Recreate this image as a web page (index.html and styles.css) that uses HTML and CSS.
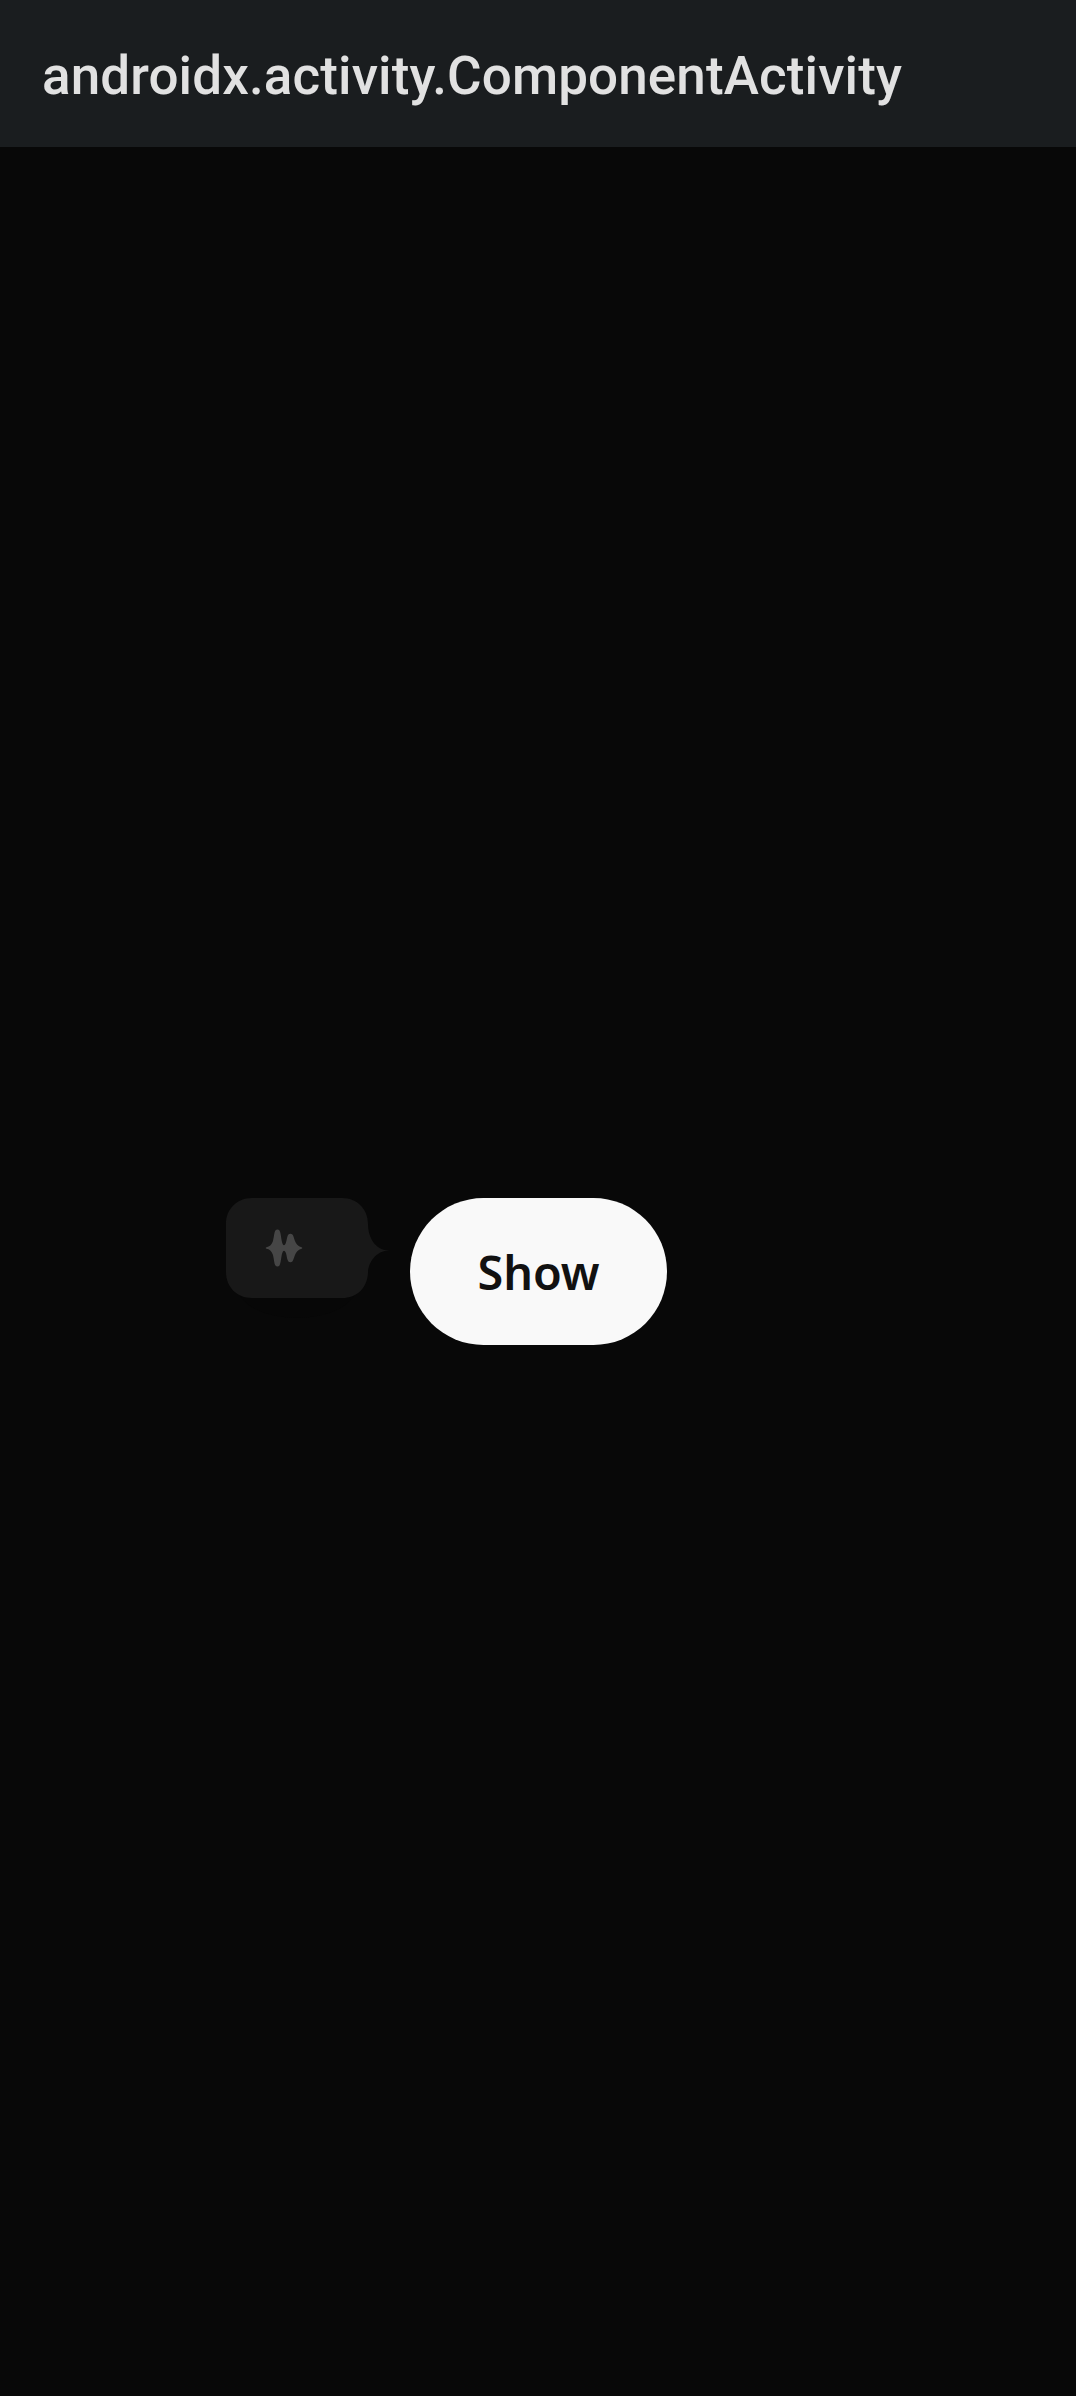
FILE: index.html
```html
<!DOCTYPE html>
<html lang="en">
<head>
<meta charset="utf-8">
<title>androidx.activity.ComponentActivity</title>
<link rel="stylesheet" href="styles.css">
</head>
<body>
<header class="app-bar"><h1 class="title">androidx.activity.ComponentActivity</h1></header>
<main class="content">
  <div class="anchor">
    <button class="show-button" type="button">Show</button>
    <div class="tooltip">
      <svg class="tooltip-art" viewBox="0 0 164 100" aria-hidden="true">
        <ellipse class="shade" cx="71" cy="88" rx="60" ry="32"/>
        <path class="bubble" d="M26 0H116C131 0 142 11 142 26C142 39 149 52.5 163.500 52.500C149 52.500 142 66 142 75C141 90 131 100 116 100H26C11 100 0 89 0 74V26C0 11 11 0 26 0Z"/>
        <path class="wave" d="M40.500 49.200C43.500 48.700 45.500 47 46.800 43.500C48 40 48 34.500 49.400 32.500C50.400 31.200 52.500 31.200 53.500 32.500C55.400 35.500 55.200 47.200 58 47.200C60.700 47.200 60.500 38.500 62.400 36.600C63.400 35.600 65.400 35.600 66.400 36.600C68.500 38.700 68.200 47.500 75.500 49.200C76.500 49.500 76.500 50.500 75.500 50.800C68.200 52.500 68.500 61.300 66.400 63.400C65.400 64.400 63.400 64.400 62.400 63.400C60.500 61.500 60.700 52.800 58 52.800C55.200 52.800 55.400 64.500 53.500 67.500C52.500 68.800 50.400 68.800 49.400 67.500C48 65.500 48 60 46.800 56.500C45.500 53 43.500 51.300 40.500 50.800C39.500 50.500 39.500 49.500 40.500 49.200Z"/>
      </svg>
    </div>
  </div>
</main>
</body>
</html>
```
FILE: styles.css
```css
* { box-sizing: border-box; }
body {
  margin: 0;
  min-height: 100vh;
  display: flex;
  flex-direction: column;
  background: #080808;
}
.app-bar {
  height: 147px;
  display: flex;
  align-items: center;
  padding: 4px 42px 0;
  background: #1a1d1f;
}
.title {
  margin: 0;
  font: 500 53px/64px Roboto, sans-serif;
  letter-spacing: 0.11px;
  color: #e1e1e1;
}
.content {
  flex: 1;
  display: flex;
  align-items: center;
  justify-content: center;
}
.anchor { position: relative; margin-left: 1px; }
.show-button {
  display: block;
  width: 257px;
  height: 147px;
  padding: 0;
  border: 0;
  border-radius: 74px;
  background: #f9f9f9;
  color: #111;
  font: 600 46.75px/64px "Noto Sans", sans-serif;
  letter-spacing: -0.1px;
  text-align: center;
}
.tooltip {
  position: absolute;
  top: 0;
  right: calc(100% + 20px);
  width: 164px;
  height: 100px;
}
.tooltip-art {
  display: block;
  width: 164px;
  height: 100px;
  overflow: visible;
}
.shade { fill: #070707; }
.bubble { fill: #181818; }
.wave { fill: #464646; }
```
